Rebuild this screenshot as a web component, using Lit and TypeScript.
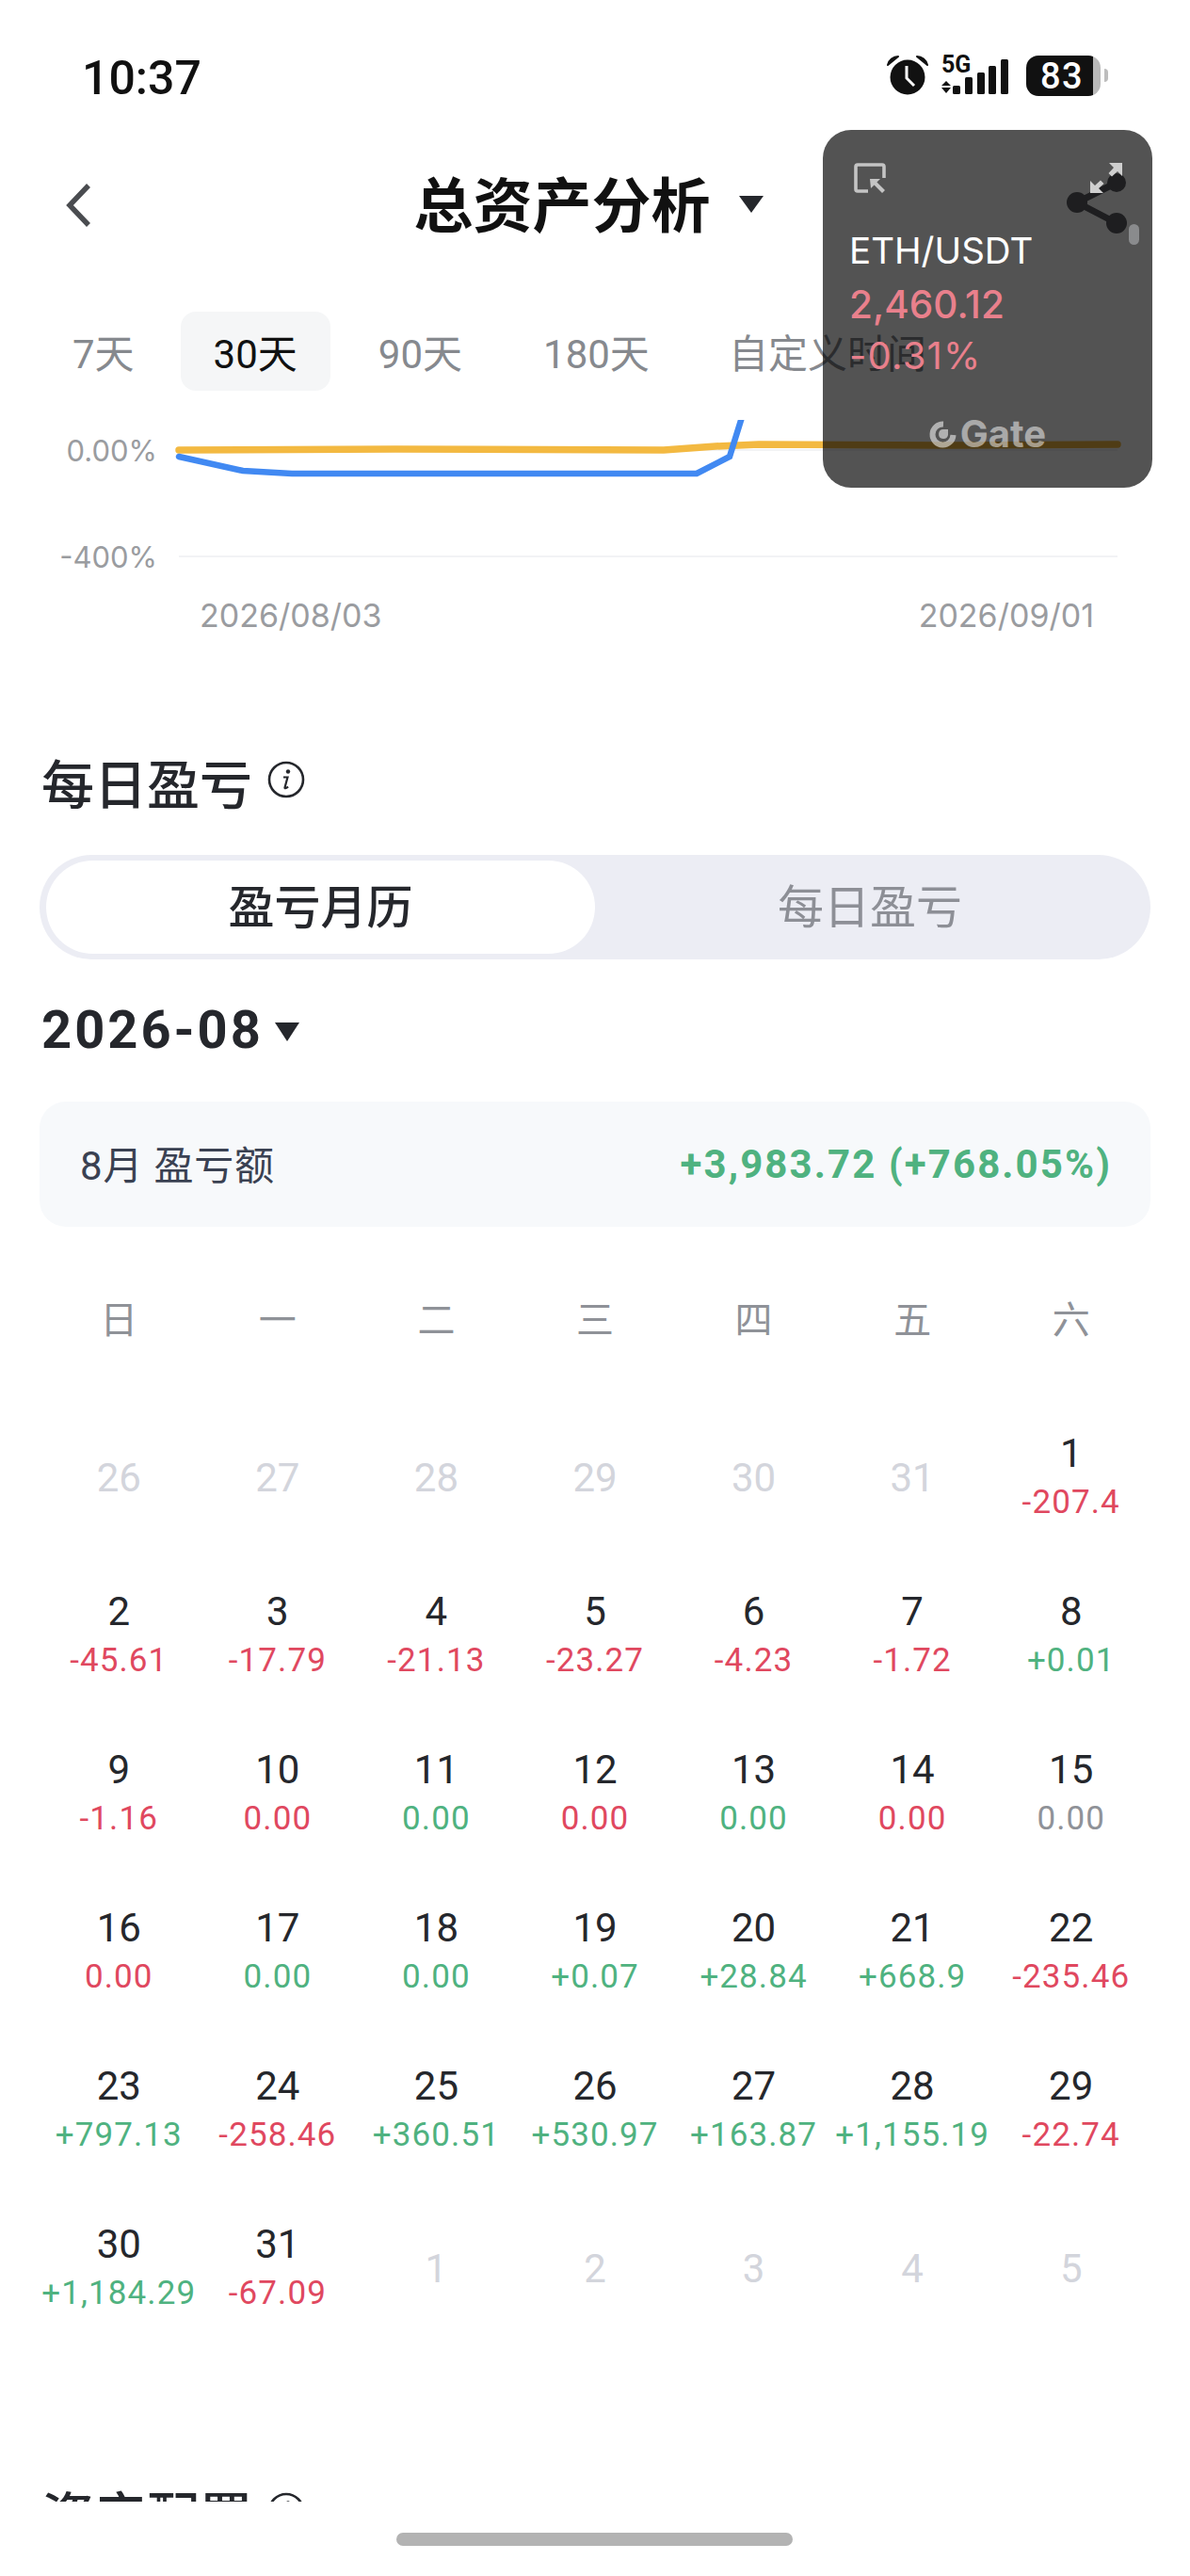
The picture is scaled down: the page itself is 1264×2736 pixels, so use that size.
import { LitElement, html, css, svg } from 'lit';
import { customElement } from 'lit/decorators.js';

type Tone = 'up' | 'down' | 'flat';

interface Day {
  n: number;
  muted?: boolean;
  value?: string;
  tone?: Tone;
}

const muted = (...nums: number[]): Day[] => nums.map(n => ({ n, muted: true }));

const day = (n: number, value: string, tone?: Tone): Day => ({
  n,
  value,
  tone: tone ?? (value.startsWith('-') ? 'down' : 'up'),
});

const DAYS: Day[] = [
  ...muted(26, 27, 28, 29, 30, 31),
  day(1, '-207.4'),
  day(2, '-45.61'),
  day(3, '-17.79'),
  day(4, '-21.13'),
  day(5, '-23.27'),
  day(6, '-4.23'),
  day(7, '-1.72'),
  day(8, '+0.01'),
  day(9, '-1.16'),
  day(10, '0.00', 'down'),
  day(11, '0.00', 'up'),
  day(12, '0.00', 'down'),
  day(13, '0.00', 'up'),
  day(14, '0.00', 'down'),
  day(15, '0.00', 'flat'),
  day(16, '0.00', 'down'),
  day(17, '0.00', 'up'),
  day(18, '0.00', 'up'),
  day(19, '+0.07'),
  day(20, '+28.84'),
  day(21, '+668.9'),
  day(22, '-235.46'),
  day(23, '+797.13'),
  day(24, '-258.46'),
  day(25, '+360.51'),
  day(26, '+530.97'),
  day(27, '+163.87'),
  day(28, '+1,155.19'),
  day(29, '-22.74'),
  day(30, '+1,184.29'),
  day(31, '-67.09'),
  ...muted(1, 2, 3, 4, 5),
];

const WEEK = ['日', '一', '二', '三', '四', '五', '六'];
const TABS = ['7天', '30天', '90天', '180天', '自定义时间'];

const infoIcon = svg`
  <circle cx="20" cy="20" r="18" fill="none" stroke="#25272c" stroke-width="2.6" />
  <circle cx="22" cy="11.5" r="2.2" fill="#25272c" />
  <path d="M17 17.5h4.5l-3 11c-.2 1 .8 1.3 3.6-.8" fill="none" stroke="#25272c" stroke-width="2.2" />
`;

@customElement('app-root')
export class AppRoot extends LitElement {
  static styles = css`
    :host {
      display: block;
      position: relative;
      width: 1264px;
      height: 2736px;
      overflow: hidden;
      background: #fff;
      color: #25272c;
      font-family: Roboto, 'Noto Sans CJK SC', sans-serif;
    }

    * {
      box-sizing: border-box;
    }

    .main {
      height: 2657px;
      overflow: hidden;
    }

    .status {
      height: 160px;
      padding: 0 87px 0 87px;
      display: flex;
      align-items: center;
      justify-content: space-between;
    }
    .time {
      font-size: 50px;
      font-weight: 500;
      color: #111;
      margin-top: 5px;
    }
    .status-icons {
      display: flex;
      align-items: center;
    }
    .alarm {
      width: 44px;
      height: 44px;
      margin-right: 14px;
    }
    .signal {
      width: 72px;
      height: 44px;
      margin-right: 18px;
      overflow: visible;
    }
    .battery {
      width: 79px;
      height: 43px;
      border-radius: 13px;
      overflow: hidden;
      display: flex;
    }
    .battery-fill {
      flex: 1;
      background: #111;
      color: #fff;
      font-size: 38px;
      font-weight: 500;
      line-height: 44px;
      padding-left: 15px;
      letter-spacing: 1.5px;
    }
    .battery-rest {
      width: 8px;
      background: #b9b9b9;
    }
    .battery-tip {
      width: 4px;
      height: 14px;
      margin-left: 4px;
      border-radius: 0 4px 4px 0;
      background: #bdbdbd;
    }

    .nav {
      height: 112px;
      display: grid;
      grid-template-columns: 1fr auto 1fr;
      align-items: center;
    }
    .back {
      width: 30px;
      height: 48px;
      margin: 3px 0 0 69px;
    }
    .title {
      display: flex;
      align-items: center;
      gap: 30px;
      font-size: 63px;
      font-weight: 700;
      color: #111;
      margin: -5px 0 0 -14px;
    }
    .title-caret {
      width: 26px;
      height: 18px;
      margin-top: 6px;
    }
    .share {
      justify-self: end;
      width: 66px;
      height: 68px;
      margin-right: 65px;
    }

    .tabs {
      display: flex;
      gap: 16px;
      margin-top: 59px;
      padding-left: 42px;
      white-space: nowrap;
    }
    .tab {
      height: 84px;
      line-height: 92px;
      padding: 0 35px;
      border-radius: 16px;
      font-size: 42px;
      color: #86898e;
    }
    .tab.active {
      background: #f5f6f7;
      color: #111;
    }
    .tab:first-child {
      margin-right: -2px;
    }
    .tab:last-child {
      margin-left: -2px;
    }

    .chart {
      display: block;
      width: 1264px;
      height: 250px;
      margin-top: 31px;
    }
    .chart text {
      font-family: Inter, sans-serif;
      fill: #9a9ca0;
    }
    .chart .axis {
      font-size: 31px;
    }
    .chart .date {
      font-size: 34px;
    }

    .section-title {
      height: 70px;
      margin: 98px 0 0 44px;
      display: flex;
      align-items: center;
      gap: 16px;
      font-size: 56px;
      font-weight: 500;
    }
    .section-title svg {
      width: 40px;
      height: 40px;
      margin-top: -2px;
    }
    .section-title.next {
      margin-top: 139px;
    }

    .segment {
      height: 111px;
      margin: 44px 42px 0;
      padding: 6px 6px 6px 7px;
      border-radius: 56px;
      background: #ecedf4;
      display: grid;
      grid-template-columns: 583px 1fr;
    }
    .segment div {
      display: flex;
      align-items: center;
      justify-content: center;
      padding-bottom: 8px;
      border-radius: 50px;
      font-size: 49px;
      color: #8d8f96;
    }
    .segment .on {
      background: #fff;
      color: #25272c;
      font-weight: 500;
    }

    .month {
      height: 60px;
      margin: 45px 0 0 44px;
      display: flex;
      align-items: center;
      gap: 11px;
      font-size: 56px;
      font-weight: 700;
      letter-spacing: 3px;
    }
    .month svg {
      width: 28px;
      height: 20px;
      margin-top: 4px;
    }

    .summary {
      height: 133px;
      margin: 46px 42px 0;
      padding: 0 41px 0 43px;
      border-radius: 28px;
      background: #f7f9fb;
      display: flex;
      align-items: center;
      justify-content: space-between;
    }
    .summary-label {
      font-size: 42px;
      letter-spacing: 0.8px;
      color: #3a4152;
      margin-top: -5px;
    }
    .summary-value {
      font-size: 42px;
      font-weight: 700;
      letter-spacing: 2.1px;
      color: #4fb280;
    }

    .week,
    .days {
      margin: 0 42px;
      display: grid;
      grid-template-columns: repeat(7, 1fr);
      text-align: center;
    }
    .week {
      height: 60px;
      margin-top: 70px;
      line-height: 60px;
      font-size: 40px;
      color: #8f9298;
    }
    .days {
      margin-top: 53px;
      grid-auto-rows: 168px;
    }
    .cell {
      display: flex;
      flex-direction: column;
      align-items: center;
      justify-content: center;
      white-space: nowrap;
    }
    .num {
      height: 52px;
      line-height: 52px;
      font-size: 42px;
    }
    .cell.muted .num {
      color: #d3d5dc;
    }
    .val {
      height: 52px;
      line-height: 52px;
      font-size: 35px;
      letter-spacing: 1.1px;
    }
    .val.up {
      color: #4fb280;
    }
    .val.down {
      color: #e0485f;
    }
    .val.flat {
      color: #8f9298;
    }

    .home {
      width: 421px;
      height: 14px;
      margin: 33px 0 0 421px;
      border-radius: 7px;
      background: #b3b3b3;
    }

    /* floating price window, sits over the page */
    .float {
      position: absolute;
      left: 874px;
      top: 138px;
      width: 350px;
      height: 380px;
      padding: 35px 32px 0 28px;
      border-radius: 30px;
      background: rgba(0, 0, 0, 0.675);
      font-family: Inter, sans-serif;
      display: flex;
      flex-direction: column;
    }
    .float-top {
      display: flex;
      justify-content: space-between;
      padding: 0 0 0 5px;
    }
    .float-top svg {
      width: 34px;
      height: 32px;
    }
    .pair {
      margin-top: 38px;
      font-size: 38.5px;
      line-height: 46px;
      color: #fff;
    }
    .price {
      margin-top: 12px;
      font-size: 40.5px;
      line-height: 46px;
      font-weight: 500;
      color: #e9808c;
    }
    .pct {
      margin-top: 8px;
      font-size: 40px;
      letter-spacing: 1.2px;
      line-height: 46px;
      color: #e9808c;
    }
    .gate {
      margin-top: 45px;
      display: flex;
      align-items: center;
      justify-content: center;
      gap: 4px;
      font-size: 40px;
      line-height: 30px;
      font-weight: 700;
      color: rgba(255, 255, 255, 0.5);
      padding-left: 4px;
    }
    .gate svg {
      width: 29px;
      height: 29px;
    }
    .grip {
      position: absolute;
      left: 325px;
      top: 100px;
      width: 11px;
      height: 22px;
      border-radius: 6px;
      background: #8a8b8d;
    }
  `;

  private renderStatus() {
    return html`<div class="status">
      <span class="time">10:37</span>
      <div class="status-icons">
        <svg class="alarm" viewBox="0 0 44 44">
          <circle cx="22" cy="24" r="18.5" fill="#111" />
          <path d="M1 11c1-5 6-9 11-9L1 11zM43 11c-1-5-6-9-11-9l11 9z" fill="#111" stroke="#111" stroke-width="2" stroke-linejoin="round" />
          <path d="M21 12v13l8 8" fill="none" stroke="#fff" stroke-width="3" />
        </svg>
        <svg class="signal" viewBox="0 0 72 44">
          <text x="0" y="19" font-family="Roboto, sans-serif" font-size="25" font-weight="700" fill="#111">5G</text>
          <path d="M5 28l5 5H0zM0 35h10l-5 6z" fill="#111" />
          <rect x="12" y="33" width="8" height="9" rx="1.5" fill="#111" />
          <rect x="25" y="24" width="8" height="18" rx="1.5" fill="#111" />
          <rect x="38" y="19" width="8" height="23" rx="1.5" fill="#111" />
          <rect x="50" y="12" width="8" height="30" rx="1.5" fill="#111" />
          <rect x="63" y="5" width="8" height="37" rx="1.5" fill="#111" />
        </svg>
        <div class="battery">
          <div class="battery-fill">83</div>
          <div class="battery-rest"></div>
        </div>
        <div class="battery-tip"></div>
      </div>
    </div>`;
  }

  private renderNav() {
    return html`<div class="nav">
      <svg class="back" viewBox="0 0 30 48">
        <path d="M25 3L5 24l20 21" fill="none" stroke="#4a4c50" stroke-width="5.5" />
      </svg>
      <div class="title">
        总资产分析
        <svg class="title-caret" viewBox="0 0 26 18"><path d="M0 0h26L13 18z" fill="#25272c" /></svg>
      </div>
      <svg class="share" viewBox="0 0 66 68">
        <path d="M53 12L11 33l42 22" fill="none" stroke="#5c5d62" stroke-width="7" />
        <circle cx="11" cy="33" r="11" fill="#5c5d62" />
        <circle cx="53" cy="12" r="10" fill="#5c5d62" />
        <circle cx="53" cy="55" r="11" fill="#5c5d62" />
      </svg>
    </div>`;
  }

  private renderChart() {
    return html`<svg class="chart" viewBox="0 446 1264 250">
      <path d="M190 478H1187M190 591H1187" stroke="#f2f3f5" stroke-width="2" />
      <text class="axis" x="167" y="490" text-anchor="end">0.00%</text>
      <text class="axis" x="167" y="603" text-anchor="end">-400%</text>
      <text class="date" x="212" y="666">2026/08/03</text>
      <text class="date" x="1162" y="666" text-anchor="end">2026/09/01</text>
      <path
        d="M190 478L420 477L705 478L760 474L806 472L1000 473L1187 472"
        fill="none"
        stroke="#f3b941"
        stroke-width="7.5"
        stroke-linecap="round"
      />
      <path
        d="M190 485L258 500L310 503L740 503L775 485L789 440"
        fill="none"
        stroke="#4189f2"
        stroke-width="6.5"
        stroke-linecap="round"
      />
    </svg>`;
  }

  private renderDay(d: Day) {
    return html`<div class="cell ${d.muted ? 'muted' : ''}">
      <span class="num">${d.n}</span>
      ${d.value ? html`<span class="val ${d.tone}">${d.value}</span>` : ''}
    </div>`;
  }

  private renderFloat() {
    return html`<div class="float">
      <div class="float-top">
        <svg viewBox="0 0 34 32">
          <path d="M15 30H4a2 2 0 0 1-2-2V4a2 2 0 0 1 2-2h26a2 2 0 0 1 2 2v12" fill="none" stroke="#c4c4c4" stroke-width="3.6" />
          <path d="M17 17h11l-3.6 3.6L33 29l-3 3-8.4-8.4L18 27z" fill="#c4c4c4" />
        </svg>
        <svg viewBox="0 0 34 32">
          <path d="M34 0v14l-5-5-6 5.5-3.5-3.5L25 5l-5-5zM0 32V19l5 5 6-5.5 3.5 3.5L9 27l5 5z" fill="#cfcfcf" />
        </svg>
      </div>
      <div class="pair">ETH/USDT</div>
      <div class="price">2,460.12</div>
      <div class="pct">-0.31%</div>
      <div class="gate">
        <svg viewBox="0 0 29 29">
          <path d="M15 3.5A11 11 0 1 0 25.5 15" fill="none" stroke="rgba(255,255,255,.55)" stroke-width="6" />
          <path d="M15 9h5v6h6v0h-6a5 5 0 1 1-5-6z" fill="rgba(255,255,255,.55)" />
        </svg>
        <span>Gate</span>
      </div>
      <div class="grip"></div>
    </div>`;
  }

  render() {
    return html`
      <div class="main">
        ${this.renderStatus()} ${this.renderNav()}
        <div class="tabs">
          ${TABS.map(t => html`<div class="tab ${t === '30天' ? 'active' : ''}">${t}</div>`)}
        </div>
        ${this.renderChart()}

        <div class="section-title">每日盈亏 <svg viewBox="0 0 40 40">${infoIcon}</svg></div>
        <div class="segment">
          <div class="on">盈亏月历</div>
          <div>每日盈亏</div>
        </div>
        <div class="month">
          2026-08
          <svg viewBox="0 0 26 20"><path d="M0 0h26L13 20z" fill="#25272c" /></svg>
        </div>
        <div class="summary">
          <span class="summary-label">8月 盈亏额</span>
          <span class="summary-value">+3,983.72 (+768.05%)</span>
        </div>
        <div class="week">${WEEK.map(w => html`<div>${w}</div>`)}</div>
        <div class="days">${DAYS.map(d => this.renderDay(d))}</div>

        <div class="section-title next">资产配置 <svg viewBox="0 0 40 40">${infoIcon}</svg></div>
      </div>
      <div class="home"></div>
      ${this.renderFloat()}
    `;
  }
}
